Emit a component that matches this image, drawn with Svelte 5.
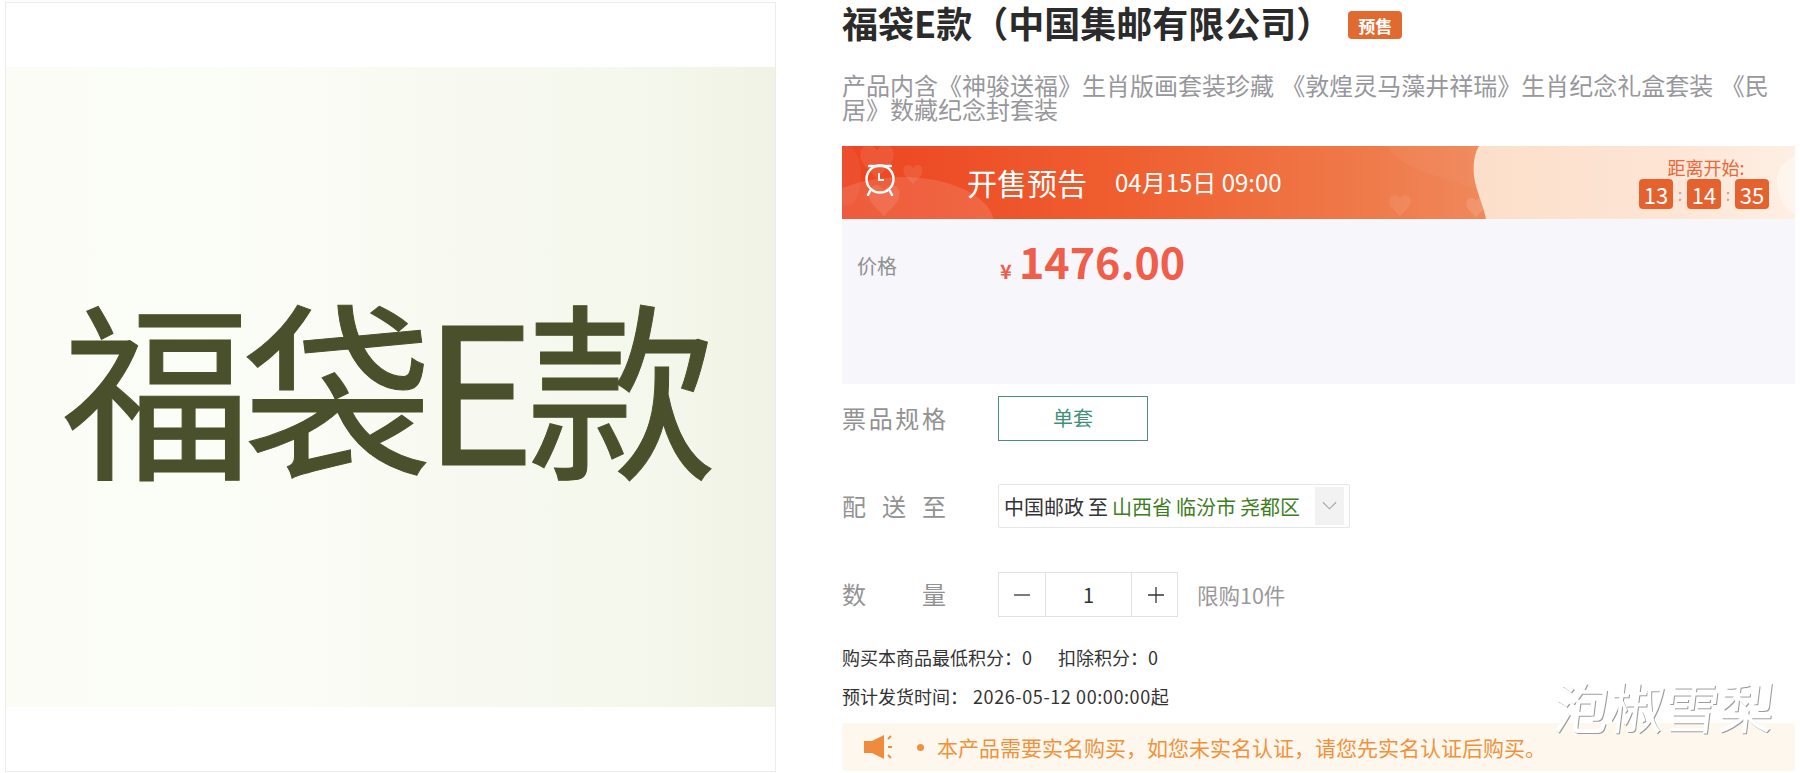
<script>
  const heartPath = "M0 -6 C-3 -12 -12 -11 -12 -3 C-12 4 -4 9 0 14 C4 9 12 4 12 -3 C12 -11 3 -12 0 -6 Z";
  const hearts = [
    { x: 35, y: 13, s: 1.4, o: 0.09 },
    { x: 42, y: 52, s: 1.3, o: 0.1 },
    { x: 71, y: 27, s: 0.8, o: 0.09 },
    { x: 558, y: 58, s: 0.9, o: 0.08 },
    { x: 634, y: 60, s: 0.8, o: 0.12 }
  ];
  const clock = ["13", "14", "35"];
</script>

<div class="page">
  <div class="gallery">
    <div class="art"><span>福袋E款</span></div>
  </div>

  <main class="info">
    <div class="head">
      <h1>福袋E款（中国集邮有限公司）</h1>
      <span class="tag">预售</span>
    </div>
    <p class="desc">产品内含《神骏送福》生肖版画套装珍藏 《敦煌灵马藻井祥瑞》生肖纪念礼盒套装 《民居》数藏纪念封套装</p>

    <section class="banner">
      <svg class="banner-bg" viewBox="0 0 953 73" preserveAspectRatio="none" aria-hidden="true">
        <defs>
          <linearGradient id="hot" x1="0" x2="1" y1="0" y2="0">
            <stop offset="0" stop-color="#ec4522" />
            <stop offset="0.3" stop-color="#ef5f30" />
            <stop offset="0.55" stop-color="#ef7a4a" />
            <stop offset="0.7" stop-color="#f08b5e" />
          </linearGradient>
          <linearGradient id="soft" x1="0" x2="1" y1="0" y2="0">
            <stop offset="0" stop-color="#fcdfca" />
            <stop offset="0.6" stop-color="#fde5d4" />
            <stop offset="1" stop-color="#feefe4" />
          </linearGradient>
        </defs>
        <rect width="953" height="73" fill="url(#hot)" />
        <ellipse cx="60" cy="78" rx="92" ry="47" fill="#fff" opacity="0.12" />
        <ellipse cx="5" cy="30" rx="14" ry="30" fill="#fff" opacity="0.05" />
        <path d="M545 0 C560 25 600 30 640 45 V0 Z" fill="#fff" opacity="0.04" />
        {#each hearts as h}
          <path d={heartPath} transform="translate({h.x} {h.y}) scale({h.s})" fill="#fff" opacity={h.o} />
        {/each}
        <path d="M637 0 C632 8 631 20 632 30 C634 45 641 58 644 73 H953 V0 Z" fill="url(#soft)" />
        <path d="M953 10 C938 16 932 30 936 45 C939 58 948 66 953 68 Z" fill="#fff" opacity="0.4" />
      </svg>

      <svg class="clock" viewBox="0 0 32 32" aria-hidden="true">
        <path d="M5 2 H27" stroke="#fff" stroke-width="2.4" stroke-linecap="round" />
        <path d="M6 27 L4 31 M26 27 L28 31" stroke="#fff" stroke-width="2.4" stroke-linecap="round" />
        <circle cx="16" cy="15" r="13.5" fill="none" stroke="#fff" stroke-width="2.4" />
        <path d="M15 9 V16 H20" fill="none" stroke="#fff" stroke-width="1.8" />
      </svg>
      <strong class="sale">开售预告</strong>
      <span class="date">04月15日 09:00</span>

      <div class="count">
        <span class="count-label">距离开始:</span>
        <div class="digits">
          {#each clock as c, i}
            {#if i > 0}<i>:</i>{/if}
            <b>{c}</b>
          {/each}
        </div>
      </div>
    </section>

    <section class="price">
      <span class="price-label">价格</span>
      <span class="price-value"><em>¥</em><strong>1476.00</strong></span>
    </section>

    <div class="row spec">
      <span class="lbl">票品规格</span>
      <button class="opt">单套</button>
    </div>

    <div class="row ship">
      <span class="lbl">配 送 至</span>
      <div class="select">
        <span class="carrier">中国邮政 至 <span class="addr">山西省 临汾市 尧都区</span></span>
        <span class="arrow">
          <svg viewBox="0 0 16 10" aria-hidden="true"><path d="M1 1 L8 8 L15 1" fill="none" stroke="#a8a8a8" stroke-width="1.2" /></svg>
        </span>
      </div>
    </div>

    <div class="row qty">
      <span class="lbl">数 量</span>
      <div class="stepper">
        <span class="step">
          <svg viewBox="0 0 16 16" aria-hidden="true"><path d="M0 8 H16" stroke="#333" stroke-width="1.3" /></svg>
        </span>
        <span class="num">1</span>
        <span class="step">
          <svg viewBox="0 0 16 16" aria-hidden="true"><path d="M0 8 H16 M8 0 V16" stroke="#333" stroke-width="1.3" /></svg>
        </span>
      </div>
      <span class="limit">限购10件</span>
    </div>

    <p class="meta first">购买本商品最低积分：0<span class="gap">扣除积分：0</span></p>
    <p class="meta second">预计发货时间：<span class="when">2026-05-12 00:00:00起</span></p>

    <div class="notice">
      <svg class="horn" viewBox="0 0 28 24" aria-hidden="true">
        <path d="M0 6 H8 L20 0 V24 L8 18 H0 Z" fill="#f08a3c" />
        <path d="M24 4 L27 1 M24 12 H28 M24 20 L27 23" stroke="#f08a3c" stroke-width="1.8" fill="none" />
      </svg>
      <span class="dot"></span>
      <span>本产品需要实名购买，如您未实名认证，请您先实名认证后购买。</span>
    </div>
  </main>

  <span class="mark">泡椒雪梨</span>
</div>

<style>
  :global(body) {
    margin: 0;
    background: #fff;
  }

  .page {
    position: relative;
    display: flex;
    gap: 66px;
    width: 1800px;
    height: 773px;
    padding-left: 5px;
    box-sizing: border-box;
    overflow: hidden;
    font-family: "Noto Sans CJK SC", "Liberation Sans", sans-serif;
    color: #333;
  }

  .gallery {
    flex: none;
    display: flex;
    align-items: center;
    box-sizing: border-box;
    width: 771px;
    height: 770px;
    margin-top: 2px;
    border: 1px solid #ececec;
  }

  .art {
    display: flex;
    align-items: center;
    justify-content: center;
    width: 100%;
    height: 640px;
    background: linear-gradient(90deg, #fbfcf6 0%, #fbfdf7 25%, #f8faf2 55%, #f4f7eb 85%, #eff2e4 100%);
    color: #4a502b;
    font-size: 190px;
    font-weight: 400;
    letter-spacing: -9px;
    line-height: 1;
    white-space: nowrap;
    -webkit-text-stroke: 1px #4a502b;
  }

  .art span {
    padding: 0 12px 8px 0;
  }

  .info {
    flex: none;
    display: flex;
    flex-direction: column;
    width: 953px;
  }

  .head {
    display: flex;
    align-items: center;
    gap: 16px;
    height: 44px;
  }

  h1 {
    margin: 0;
    font-size: 36px;
    font-weight: 700;
    line-height: 44px;
    color: #2b2b2b;
    white-space: nowrap;
  }

  .tag {
    display: flex;
    align-items: center;
    justify-content: center;
    width: 54px;
    height: 28px;
    margin-top: 6px;
    border-radius: 4px;
    background: #e06a30;
    color: #fff;
    font-size: 17px;
    font-weight: 700;
  }

  .desc {
    margin: 29px 0 25px;
    font-size: 24px;
    line-height: 24px;
    word-spacing: 2px;
    color: #97979c;
  }

  .banner {
    position: relative;
    display: flex;
    align-items: center;
    flex: none;
    height: 73px;
    color: #fff;
  }

  .banner > * {
    position: relative;
  }

  .banner > .banner-bg {
    position: absolute;
    inset: 0;
    width: 100%;
    height: 100%;
  }

  .clock {
    width: 32px;
    height: 32px;
    margin: 0 0 5px 22px;
  }

  .sale {
    margin: 0 0 2px 71px;
    font-size: 30px;
    font-weight: 400;
    line-height: 40px;
  }

  .date {
    margin: 0 0 2px 28px;
    font-size: 24px;
    line-height: 40px;
  }

  .count {
    display: flex;
    flex-direction: column;
    align-items: center;
    margin: 0 26px 0 auto;
    padding-bottom: 1px;
  }

  .count-label {
    padding-left: 4px;
    font-size: 18px;
    line-height: 24px;
    color: #e8683a;
  }

  .digits {
    display: flex;
    align-items: center;
    gap: 4px;
    height: 30px;
  }

  .digits b {
    width: 34px;
    height: 30px;
    border-radius: 4px;
    background: #e5622f;
    color: #fff;
    font-size: 22px;
    font-weight: 400;
    line-height: 30px;
    text-align: center;
  }

  .digits i {
    width: 6px;
    color: #b9a294;
    font-size: 16px;
    font-style: normal;
    text-align: center;
  }

  .price {
    flex: none;
    display: grid;
    grid-template-columns: 143px 1fr;
    align-items: start;
    box-sizing: border-box;
    height: 165px;
    padding: 15px 0 0 15px;
    background: #f6f6fb;
  }

  .price-label {
    padding-top: 14px;
    font-size: 20px;
    line-height: 36px;
    color: #909090;
  }

  .price-value {
    display: flex;
    align-items: baseline;
    line-height: 52px;
    color: #f05d48;
  }

  .price-value em {
    width: 19px;
    font-size: 20px;
    font-style: normal;
    font-weight: 700;
  }

  .price-value strong {
    font-size: 43px;
    font-weight: 700;
  }

  .row {
    flex: none;
    display: flex;
    align-items: center;
  }

  .spec {
    height: 45px;
    margin-top: 12px;
  }

  .ship {
    height: 44px;
    margin-top: 43px;
  }

  .qty {
    height: 45px;
    margin-top: 44px;
  }

  .lbl {
    flex: none;
    width: 104px;
    margin-right: 52px;
    font-size: 24px;
    line-height: 32px;
    color: #929292;
    text-align: justify;
    text-align-last: justify;
  }

  .spec .lbl,
  .qty .lbl {
    margin-bottom: 2px;
  }

  .opt {
    width: 150px;
    height: 45px;
    padding: 0 0 2px;
    border: 1px solid #4a9076;
    border-radius: 0;
    background: #fff;
    color: #3f8f79;
    font: inherit;
    font-size: 20px;
  }

  .select {
    display: flex;
    align-items: center;
    justify-content: space-between;
    box-sizing: border-box;
    width: 352px;
    height: 44px;
    padding: 2px 5px 2px 5px;
    border: 1px solid #e6e6e6;
    border-radius: 2px;
    font-size: 20px;
    word-spacing: -0.5px;
    color: #333;
    white-space: nowrap;
  }

  .addr {
    color: #3d7d1e;
  }

  .arrow {
    display: flex;
    align-items: center;
    justify-content: center;
    width: 29px;
    height: 38px;
    background: #f2f2f2;
  }

  .arrow svg {
    width: 15px;
    height: 10px;
  }

  .stepper {
    display: grid;
    grid-template-columns: 46px 87px 47px;
    box-sizing: border-box;
    width: 180px;
    height: 45px;
    border: 1px solid #e2e2e2;
  }

  .step,
  .num {
    display: flex;
    align-items: center;
    justify-content: center;
    font-size: 20px;
  }

  .num {
    border-left: 1px solid #e2e2e2;
    border-right: 1px solid #e2e2e2;
  }

  .step svg {
    width: 16px;
    height: 16px;
  }

  .limit {
    margin-left: 19px;
    font-size: 21.5px;
    color: #999;
  }

  .meta {
    margin: 0;
    font-size: 18px;
    line-height: 24px;
    color: #333;
  }

  .first {
    margin-top: 28px;
  }

  .second {
    margin-top: 15px;
  }

  .gap {
    margin-left: 26px;
  }

  .when {
    margin-left: 5px;
    letter-spacing: 0.6px;
  }

  .notice {
    flex: none;
    display: flex;
    align-items: center;
    box-sizing: border-box;
    height: 48px;
    margin-top: 15px;
    padding-left: 22px;
    border-radius: 4px;
    background: #fef7ee;
    color: #f0923c;
    font-size: 21px;
  }

  .horn {
    width: 28px;
    height: 24px;
  }

  .dot {
    width: 7px;
    height: 7px;
    margin: 0 13px 0 25px;
    border-radius: 50%;
    background: #f0923c;
  }

  .mark {
    position: absolute;
    left: 1555px;
    top: 672px;
    color: #fff;
    font-size: 55px;
    font-weight: 400;
    line-height: 66px;
    text-shadow: 1px 1px 0 #9c9c9c;
    transform: skewX(-7deg);
    white-space: nowrap;
  }
</style>
